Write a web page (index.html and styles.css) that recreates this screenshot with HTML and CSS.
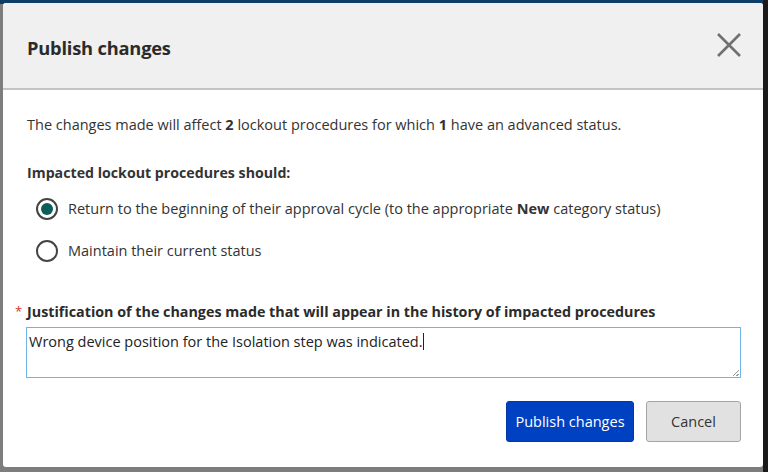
FILE: index.html
```html
<!DOCTYPE html>
<html>
<head>
<meta charset="utf-8">
<link rel="stylesheet" href="styles.css">
</head>
<body>
<div class="backdrop">
  <div class="dialog">
    <div class="header">
      <h1 class="title">Publish changes</h1>
      <button class="close" aria-label="Close">
        <svg width="26" height="26" viewBox="0 0 26 26"><path d="M2 2 L24 24 M24 2 L2 24" stroke="#707070" stroke-width="2.6" fill="none"/></svg>
      </button>
    </div>
    <div class="body">
      <p class="intro">The changes made will affect <b>2</b> lockout procedures for which <b>1</b> have an advanced status.</p>
      <p class="label">Impacted lockout procedures should:</p>
      <div class="options">
        <label class="option"><span class="radio checked"></span><span>Return to the beginning of their approval cycle (to the appropriate <b>New</b> category status)</span></label>
        <label class="option"><span class="radio"></span><span>Maintain their current status</span></label>
      </div>
      <p class="just"><span class="req">*</span>Justification of the changes made that will appear in the history of impacted procedures</p>
      <div class="textarea">Wrong device position for the Isolation step was indicated.<span class="caret"></span><span class="grip"></span></div>
      <div class="actions">
        <button class="btn primary">Publish changes</button>
        <button class="btn secondary">Cancel</button>
      </div>
    </div>
  </div>
</div>
</body>
</html>
```
FILE: styles.css
```css
html, body { margin: 0; padding: 0; }
body {
  width: 768px; height: 472px; overflow: hidden;
  background:
    linear-gradient(to right, transparent 763px, #1c1a18 763px),
    linear-gradient(to bottom, #0e3d66 0, #0e3d66 4px, #7d7d7d 4px);
  font-family: "Open Sans", "Noto Sans", sans-serif;
  color: #333;
}
.backdrop { padding: 3px 5px 5px 3px; height: 464px; }
.dialog {
  background: #fff; height: 464px; border-radius: 3px; overflow: hidden;
  display: flex; flex-direction: column;
}
.header {
  background: #f0f0f0; height: 87px; border-bottom: 2px solid #c4c4c4; box-sizing: border-box;
  display: flex; align-items: center; justify-content: space-between;
  padding: 3px 21px 0 24px;
}
.title { margin: 0; font-size: 18.3px; font-weight: 700; color: #2b2b2b; letter-spacing: -0.2px; }
.close { background: none; border: 0; padding: 0; width: 26px; height: 26px; display: flex; margin-top: -4px; }
.body { padding: 0 24px; font-size: 14.5px; }
.intro { margin: 25px 0 0; line-height: 20px; }
.label { margin: 28px 0 0; font-weight: 700; line-height: 20px; font-size: 14.2px; }
.options { margin-top: 15px; display: flex; flex-direction: column; gap: 20px; padding-left: 9px; }
.option { display: flex; align-items: center; gap: 10px; line-height: 22px; }
.radio {
  width: 18px; height: 18px; border: 2px solid #444; border-radius: 50%;
  box-sizing: content-box; display: flex; align-items: center; justify-content: center; flex: none;
}
.radio.checked::after { content: ""; width: 12px; height: 12px; border-radius: 50%; background: #0b5e59; }
.just { margin: 39px 0 0; font-weight: 700; line-height: 20px; color: #2b2b2b; font-size: 14.3px; }
.req { display: inline-block; width: 10px; margin-left: -12px; margin-right: 2px; color: #d9302c; font-weight: 400; font-size: 13px; vertical-align: 1px; }
.textarea {
  position: relative; margin-top: 5px; height: 51px; border: 1px solid #6fb6e6;
  padding: 4px 2px; box-sizing: border-box; font-size: 14.5px; color: #222; line-height: 20px;
  margin-left: -1px; margin-right: -2px;
}
.caret { display: inline-block; width: 1px; height: 17px; background: #222; vertical-align: -3px; }
.grip {
  position: absolute; right: 1px; bottom: 1px; width: 6px; height: 6px;
  background: linear-gradient(135deg, transparent 45%, #999 45%, #999 55%, transparent 55%, transparent 75%, #999 75%, #999 85%, transparent 85%);
}
.actions { display: flex; justify-content: flex-end; gap: 12px; margin-top: 23px; margin-right: -2px; }
.btn { font-family: inherit; font-size: 14.5px; height: 41px; border-radius: 3px; padding: 0; white-space: nowrap; }
.primary { background: #0041c2; color: #fff; border: 1px solid #0038a8; width: 128px; }
.secondary { background: #e1e1e1; color: #333; border: 1px solid #a5a5a5; width: 95px; }
```
